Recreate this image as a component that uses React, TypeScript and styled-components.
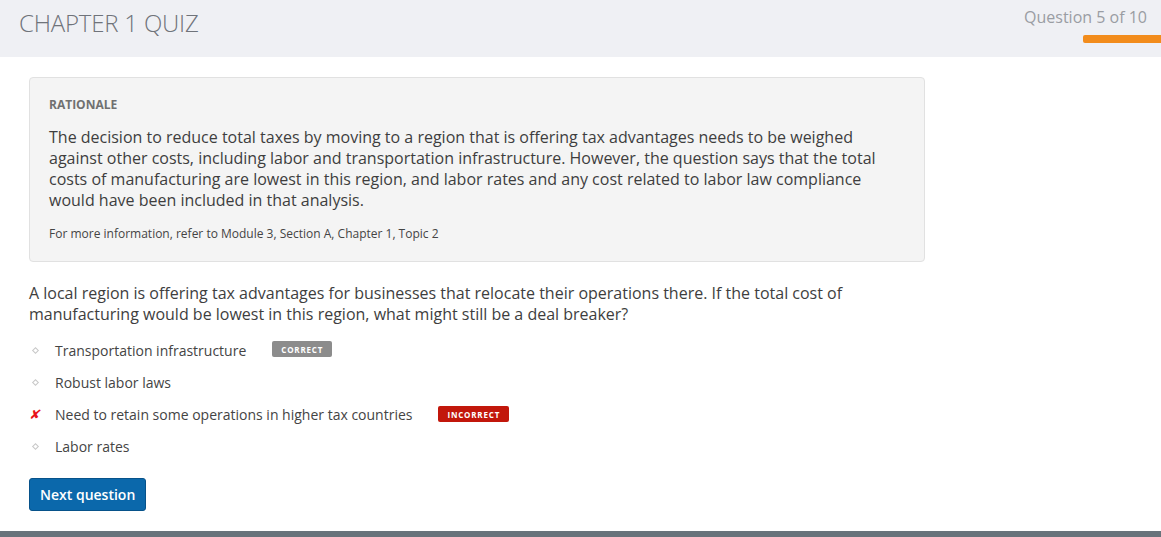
import React from 'react';
import styled, { createGlobalStyle } from 'styled-components';

const GlobalStyle = createGlobalStyle`
	html, body {
		margin: 0;
		padding: 0;
		background: #ffffff;
		font-family: "Open Sans", "Liberation Sans", sans-serif;
	}
`;

const Page = styled.div`
	height: 537px;
	display: flex;
	flex-direction: column;
	overflow: hidden;
`;

const Header = styled.header`
	height: 57px;
	background: #eff0f4;
	display: flex;
	justify-content: space-between;
	flex-shrink: 0;
`;

const Title = styled.h1`
	margin: 0;
	padding: 6px 0 0 19px;
	font-size: 24px;
	font-weight: 300;
	color: #6f737a;
	letter-spacing: -0.2px;
`;

const Progress = styled.div`
	display: flex;
	flex-direction: column;
	align-items: flex-end;
	padding-top: 6px;
`;

const ProgressLabel = styled.div`
	font-size: 16px;
	color: #9a9da3;
	padding-right: 14px;
	line-height: 22px;
`;

const ProgressBar = styled.div`
	margin-top: 7px;
	width: 78px;
	height: 8px;
	background: #f28c1c;
	border-radius: 2px 0 0 2px;
`;

const Content = styled.main`
	flex: 1;
	padding: 20px 29px 0 29px;
`;

const Rationale = styled.section`
	width: 855px;
	background: #f4f4f4;
	border: 1px solid #e1e1e1;
	border-radius: 4px;
	padding: 18px 20px 18px 19px;
`;

const RationaleHeading = styled.div`
	font-size: 12px;
	font-weight: 700;
	color: #707070;
	line-height: 18px;
`;

const RationaleText = styled.p`
	margin: 13px 0 0;
	font-size: 16px;
	line-height: 21px;
	color: #3e3e3e;
`;

const MoreInfo = styled.p`
	margin: 14px 0 0;
	font-size: 12px;
	line-height: 18px;
	color: #444;
`;

const Question = styled.p`
	margin: 21px 0 0;
	width: 850px;
	font-size: 16px;
	line-height: 21px;
	color: #3e3e3e;
`;

const Options = styled.ul`
	list-style: none;
	margin: 15px 0 0;
	padding: 0;
	display: flex;
	flex-direction: column;
	gap: 12px;
`;

const Option = styled.li`
	display: flex;
	align-items: center;
	height: 20px;
	font-size: 14px;
	color: #444;
`;

const Marker = styled.span`
	width: 26px;
	display: flex;
	align-items: center;
	padding-left: 3px;
	box-sizing: border-box;
`;

const Diamond = styled.span`
	width: 3px;
	height: 3px;
	margin-left: 1px;
	border: 1px solid #c8c8c8;
	transform: rotate(45deg);
`;

const Cross = styled.span`
	color: #e8141a;
	font-size: 13px;
	font-family: "DejaVu Sans", sans-serif;
	margin-left: -2px;
	transform: skewX(-12deg);
`;

const Badge = styled.span<{ $tone: 'correct' | 'incorrect' }>`
	margin-left: 26px;
	height: 16px;
	padding: 0 9px;
	display: inline-flex;
	align-items: center;
	border-radius: 2px;
	font-size: 8px;
	font-weight: 700;
	letter-spacing: 0.8px;
	color: #fff;
	background: ${p => p.$tone === 'correct' ? '#8c8c8c' : '#c2170b'};
	position: relative;
	top: ${p => p.$tone === 'correct' ? '-1px' : '0'};
`;

const NextButton = styled.button`
	margin-top: 22px;
	height: 33px;
	padding: 0 10px;
	background: #0b68ab;
	border: 1px solid #07528a;
	border-radius: 3px;
	color: #fff;
	font-family: "Open Sans", "Liberation Sans", sans-serif;
	font-size: 14px;
	font-weight: 600;
	cursor: pointer;
`;

const Footer = styled.div`
	height: 6px;
	background: #68737b;
	flex-shrink: 0;
`;

type Answer = {
	text: string;
	status?: 'correct' | 'incorrect';
};

const answers: Answer[] = [
	{ text: 'Transportation infrastructure', status: 'correct' },
	{ text: 'Robust labor laws' },
	{ text: 'Need to retain some operations in higher tax countries', status: 'incorrect' },
	{ text: 'Labor rates' },
];

const App = () => {
	return (
		<Page>
			<GlobalStyle />
			<Header>
				<Title>CHAPTER 1 QUIZ</Title>
				<Progress>
					<ProgressLabel>Question 5 of 10</ProgressLabel>
					<ProgressBar />
				</Progress>
			</Header>
			<Content>
				<Rationale>
					<RationaleHeading>RATIONALE</RationaleHeading>
					<RationaleText>
						The decision to reduce total taxes by moving to a region that is offering tax advantages needs to be weighed
						against other costs, including labor and transportation infrastructure. However, the question says that the total
						costs of manufacturing are lowest in this region, and labor rates and any cost related to labor law compliance
						would have been included in that analysis.
					</RationaleText>
					<MoreInfo>For more information, refer to Module 3, Section A, Chapter 1, Topic 2</MoreInfo>
				</Rationale>
				<Question>
					A local region is offering tax advantages for businesses that relocate their operations there. If the total cost of
					manufacturing would be lowest in this region, what might still be a deal breaker?
				</Question>
				<Options>
					{answers.map(a => (
						<Option key={a.text}>
							<Marker>{a.status === 'incorrect' ? <Cross>✘</Cross> : <Diamond />}</Marker>
							{a.text}
							{a.status && <Badge $tone={a.status}>{a.status === 'correct' ? 'CORRECT' : 'INCORRECT'}</Badge>}
						</Option>
					))}
				</Options>
				<NextButton>Next question</NextButton>
			</Content>
			<Footer />
		</Page>
	);
}

export default App;
